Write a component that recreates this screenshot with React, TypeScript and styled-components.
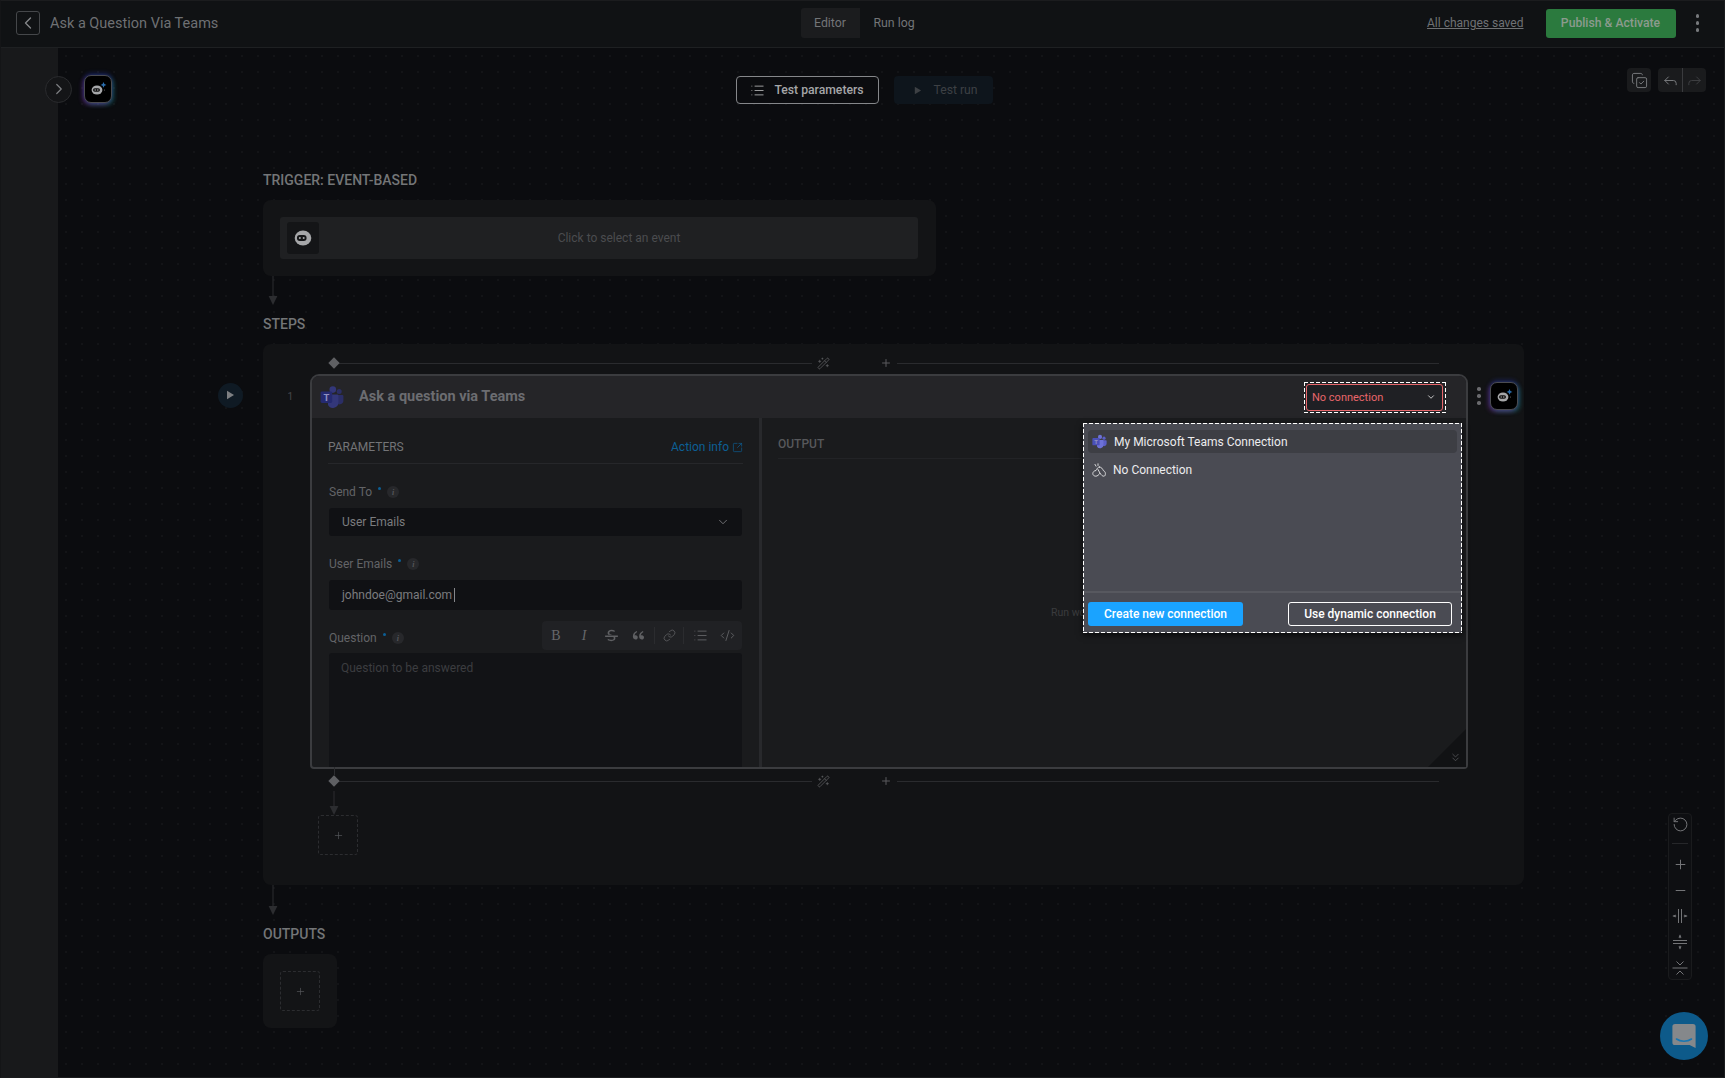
import React from "react";
import styled, { createGlobalStyle, css } from "styled-components";
import {
  ChevronDown,
  ChevronLeft,
  ChevronRight,
  ChevronsDown,
  CodeXml,
  CopyCheck,
  Forward,
  Link as LinkIcon,
  List,
  Minus,
  Plus,
  Reply,
  RotateCcw,
  SquareArrowOutUpRight,
  Wand2,
} from "lucide-react";
import { RiDoubleQuotesL, RiStrikethrough } from "react-icons/ri";

const GlobalStyle = createGlobalStyle`
  html, body { margin: 0; padding: 0; background: #0b0c0f; }
  body { font-family: Roboto, "Liberation Sans", sans-serif; overflow: hidden; }
  * { box-sizing: border-box; }
`;

const dashedFrame = css`
  padding: 1px;
  background-image: linear-gradient(90deg, #fff 66%, transparent 0), linear-gradient(90deg, #fff 66%, transparent 0),
    linear-gradient(#fff 66%, transparent 0), linear-gradient(#fff 66%, transparent 0);
  background-size: 6px 1px, 6px 1px, 1px 6px, 1px 6px;
  background-position: top left, bottom left, top left, top right;
  background-repeat: repeat-x, repeat-x, repeat-y, repeat-y;
`;

const Page = styled.div`
  position: relative;
  width: 1725px;
  height: 1078px;
  display: flex;
  flex-direction: column;
  overflow: hidden;
  background: #0b0c0f;
  border: 1px solid #1b1c1e;
  border-left-color: #141517;
`;

/* ---------- top bar ---------- */
const TopBar = styled.header`
  flex: none;
  height: 47px;
  display: grid;
  grid-template-columns: 1fr auto 1fr;
  align-items: center;
  padding: 0 25px 2px 15px;
  background: #101214;
  border-bottom: 1px solid #1e2022;
`;
const TopLeft = styled.div`
  display: flex;
  align-items: center;
  gap: 10px;
`;
const BackButton = styled.button`
  width: 24px;
  height: 24px;
  padding: 0;
  display: flex;
  align-items: center;
  justify-content: center;
  color: #85878a;
  background: transparent;
  border: 1px solid #45474a;
  border-radius: 3px;
`;
const PageTitle = styled.h1`
  margin: 0;
  font-size: 14.5px;
  font-weight: 400;
  color: #6e7073;
`;
const Tabs = styled.nav`
  display: flex;
  height: 30px;
  margin-left: 14px;
`;
const Tab = styled.div<{ $active?: boolean }>`
  display: flex;
  align-items: center;
  justify-content: center;
  width: ${(p) => (p.$active ? "59px" : "69px")};
  font-size: 12.3px;
  color: #737578;
  background: ${(p) => (p.$active ? "#1b1c1e" : "transparent")};
  border-radius: 3px 0 0 3px;
`;
const TopRight = styled.div`
  display: flex;
  align-items: center;
  justify-content: flex-end;
`;
const SavedLink = styled.a`
  font-size: 12px;
  color: #6f7174;
  text-decoration: underline;
  margin-right: 22px;
`;
const PublishButton = styled.button`
  width: 130px;
  height: 29px;
  padding: 0;
  font: 500 12.2px Roboto, sans-serif;
  color: #8b9b8e;
  background: #2b7a3e;
  border: 0;
  border-radius: 3px;
`;
const Kebab = styled.div<{ $color: string }>`
  display: flex;
  flex-direction: column;
  gap: 3.5px;
  span {
    width: 3.5px;
    height: 3.5px;
    border-radius: 50%;
    background: ${(p) => p.$color};
  }
`;
const TopKebab = styled(Kebab)`
  margin-left: 20px;
`;

/* ---------- body ---------- */
const Body = styled.div`
  flex: 1;
  display: flex;
  min-height: 0;
`;
const Sidebar = styled.aside`
  flex: none;
  width: 57px;
  background: #18191b;
`;
const Canvas = styled.main`
  position: relative;
  z-index: 1;
  flex: 1;
  padding-top: 20px;
  background-color: #0b0c0f;
  background-image: radial-gradient(circle, #131417 0.8px, transparent 1px);
  background-size: 16px 16px;
`;
const CanvasHead = styled.div`
  margin-left: -58px;
  height: 35px;
  display: grid;
  grid-template-columns: 1fr auto 1fr;
  padding: 0 18px 0 0;
`;
const HeadLeft = styled.div`
  display: flex;
  align-items: center;
  gap: 12px;
  padding: 7px 0 0 45px;
  height: 35px;
`;
const ExpandButton = styled.button`
  width: 27px;
  height: 27px;
  padding: 0;
  display: flex;
  align-items: center;
  justify-content: center;
  color: #7d7f82;
  background: #141517;
  border: 1px solid #2a2b2e;
  border-radius: 50%;
`;
const AiBadge = styled.div`
  flex: none;
  width: 28px;
  height: 28px;
  display: flex;
  align-items: center;
  justify-content: center;
  background: #000;
  border: 1px solid #4a4b50;
  border-radius: 7px;
  box-shadow: 0 -2px 4px rgba(50, 70, 200, 0.35), -2px 2px 4px rgba(150, 60, 200, 0.35),
    2px 2px 4px rgba(40, 180, 180, 0.35);
`;
const HeadCenter = styled.div`
  display: flex;
  gap: 15px;
  padding: 8px 0 0 22px;
`;
const ParamsButton = styled.button`
  width: 143px;
  height: 28px;
  padding: 0;
  display: flex;
  align-items: center;
  justify-content: center;
  gap: 9px;
  font: 500 12.2px Roboto, sans-serif;
  color: #a5a6a8;
  background: #0b0c0f;
  border: 1.5px solid #85878a;
  border-radius: 4px;
`;
const RunButton = styled.button`
  width: 99px;
  height: 28px;
  padding: 0 0 0 19px;
  display: flex;
  align-items: center;
  gap: 12px;
  font: 400 12.2px Roboto, sans-serif;
  color: #3d4044;
  background: #0e151c;
  border: 0;
  border-radius: 4px;
`;
const HeadRight = styled.div`
  display: flex;
  justify-content: flex-end;
  gap: 7px;
`;
const ToolGroup = styled.div`
  height: 24px;
  display: flex;
  background: #1a1b1d;
  border-radius: 4px;
`;
const ToolButton = styled.div<{ $dim?: boolean; $split?: boolean }>`
  width: 24px;
  display: flex;
  align-items: center;
  justify-content: center;
  color: ${(p) => (p.$dim ? "#3e3f42" : "#77797c")};
  border-left: ${(p) => (p.$split ? "1px solid #3a3b3e" : "0")};
`;

/* ---------- flow column ---------- */
const Flow = styled.div`
  margin: 69px 0 0 205px;
  width: 1261px;
`;
const SectionLabel = styled.h2`
  margin: 0 0 12px;
  font-size: 14px;
  line-height: 16px;
  font-weight: 500;
  color: #737577;
`;
const TriggerCard = styled.section`
  width: 673px;
  height: 76px;
  padding: 17px 18px 17px 17px;
  background: #131416;
  border-radius: 8px;
`;
const TriggerInner = styled.div`
  position: relative;
  height: 42px;
  display: flex;
  align-items: center;
  justify-content: center;
  padding-left: 40px;
  font-size: 12px;
  color: #4b4c4f;
  background: #1f2022;
  border-radius: 3px;
`;
const TriggerIcon = styled.div`
  position: absolute;
  left: 7px;
  top: 5px;
  width: 32px;
  height: 32px;
  display: flex;
  align-items: center;
  justify-content: center;
  background: #141517;
  border-radius: 3px;
`;
const ArrowWrap = styled.div`
  margin-left: 5px;
  svg {
    display: block;
  }
`;
const SectionGap = styled.div`
  height: 11px;
`;
const StepsCard = styled.section`
  height: 541px;
  padding-top: 9px;
  background: #121315;
  border-radius: 8px;
`;
const Inserter = styled.div`
  position: relative;
  margin-left: 66px;
  width: 1110px;
  height: 20px;
  display: flex;
  align-items: center;
  color: #5a5b5e;
`;
const LowerInserter = styled(Inserter)`
  margin-top: 2px;
  &::before {
    content: "";
    position: absolute;
    left: 5px;
    top: -4px;
    height: 8px;
    width: 1px;
    background: #2c2d30;
  }
`;
const Diamond = styled.span`
  flex: none;
  width: 8px;
  height: 8px;
  margin-left: 1px;
  transform: rotate(45deg);
  background: #5f6063;
`;
const InsertLine = styled.span<{ $w?: number }>`
  height: 1px;
  background: #2a2b2e;
  flex: ${(p) => (p.$w ? `0 0 ${p.$w}px` : "1")};
`;
const InsertIcon = styled.span`
  flex: none;
  width: 22px;
  display: flex;
  justify-content: center;
`;
const InsertSpacer = styled.span`
  flex: 0 0 41px;
`;
const StepRow = styled.div`
  display: flex;
  align-items: flex-start;
  margin: 1px 0 0 -45.5px;
`;
const PlayCircle = styled.div`
  flex: none;
  width: 25px;
  height: 25px;
  margin-top: 8.5px;
  display: flex;
  align-items: center;
  justify-content: center;
  background: #0f1a24;
  border-radius: 50%;
`;
const StepNumber = styled.div`
  flex: none;
  width: 67.5px;
  padding: 16px 17px 0 0;
  text-align: right;
  font-size: 10px;
  line-height: 14px;
  color: #47484b;
`;
const StepCard = styled.article`
  position: relative;
  flex: none;
  width: 1158px;
  height: 395px;
  display: flex;
  flex-direction: column;
  background: #1a1b1d;
  border: 2px solid #3b3c3f;
  border-radius: 9px 9px 4px 4px;
`;
const StepHeader = styled.div`
  flex: none;
  height: 42px;
  display: flex;
  align-items: center;
  padding: 0 20px 0 8px;
  background: #252528;
  border-radius: 7px 7px 0 0;
`;
const StepTitle = styled.div`
  flex: 1;
  margin: -1px 0 0 15px;
  font-size: 14.5px;
  font-weight: 700;
  color: #6c6d71;
`;
const ConnectionOutline = styled.div`
  ${dashedFrame}
  width: 142px;
  height: 31px;
  padding: 2px 3px 2px 2px;
`;
const ConnectionSelect = styled.div`
  height: 100%;
  display: flex;
  align-items: center;
  justify-content: space-between;
  padding: 0 6px 0 5px;
  font-size: 11px;
  color: #e8666b;
  background: #1f2024;
  border: 1px solid #e8666b;
  border-radius: 3px;
  svg {
    color: #e6e6e6;
  }
`;
const StepBody = styled.div`
  flex: 1;
  min-height: 0;
  display: flex;
`;
const LeftPane = styled.div`
  flex: none;
  width: 450px;
  display: flex;
  flex-direction: column;
  padding: 21px 17px 0 17px;
  border-right: 3px solid #28292c;
`;
const PaneHeader = styled.div`
  display: flex;
  align-items: center;
  justify-content: space-between;
  height: 25px;
  padding-bottom: 8px;
  border-bottom: 1px solid #26272a;
  margin: 0 -1px 0 -1px;
`;
const PaneTitle = styled.div`
  font-size: 12px;
  color: #737477;
`;
const ActionInfo = styled.a`
  display: flex;
  align-items: center;
  gap: 3px;
  font-size: 12px;
  color: #0c5f95;
`;
const FieldLabel = styled.div<{ $top?: number }>`
  display: flex;
  align-items: center;
  height: 16px;
  margin-top: ${(p) => p.$top ?? 0}px;
  font-size: 12px;
  color: #636467;
`;
const Star = styled.span`
  width: 3px;
  height: 3px;
  margin: -8px 0 0 6px;
  background: #0c5f95;
  border-radius: 50%;
`;
const InfoDot = styled.span`
  width: 12px;
  height: 12px;
  margin-left: 6px;
  display: flex;
  align-items: center;
  justify-content: center;
  font: italic 700 8px "Liberation Serif", serif;
  color: #55565a;
  background: #27282b;
  border-radius: 50%;
`;
const SelectField = styled.div`
  height: 28px;
  margin-top: 8px;
  display: flex;
  align-items: center;
  justify-content: space-between;
  padding: 0 12px 0 13px;
  font-size: 12px;
  color: #7b7c7f;
  background: #101114;
  border-radius: 3px;
`;
const InputField = styled(SelectField)`
  height: 30px;
  justify-content: flex-start;
`;
const Caret = styled.span`
  width: 1px;
  height: 14px;
  margin-left: 2px;
  background: #85868a;
`;
const QuestionRow = styled.div`
  height: 29px;
  margin-top: 11px;
  display: flex;
  align-items: center;
  justify-content: space-between;
`;
const QuestionLabel = styled(FieldLabel)`
  padding-top: 5px;
`;
const EditorTools = styled.div`
  width: 200px;
  height: 29px;
  display: flex;
  align-items: center;
  background: #202124;
  border-radius: 4px;
  color: #5f6063;
`;
const EditorTool = styled.span<{ $w: number }>`
  flex: 0 0 ${(p) => p.$w}px;
  display: flex;
  align-items: center;
  justify-content: center;
`;
const SerifGlyph = styled.span<{ $italic?: boolean }>`
  font: ${(p) => (p.$italic ? "italic 400" : "400")} 14px "Liberation Serif", serif;
  color: #66676a;
`;
const ToolSep = styled.span<{ $lead?: number }>`
  flex: none;
  width: 1px;
  height: 17px;
  margin-left: ${(p) => p.$lead ?? 0}px;
  background: #2b2c2f;
`;
const TextArea = styled.div`
  flex: 1;
  margin-top: 3px;
  padding: 8px 12px;
  font-size: 12px;
  line-height: 14px;
  color: #3c3d40;
  background: #121316;
  border-radius: 3px 3px 0 0;
`;
const RightPane = styled.div`
  flex: 1;
  position: relative;
  display: flex;
  flex-direction: column;
  padding: 18px 0 0 16px;
`;
const OutputTitle = styled.div`
  padding-bottom: 6px;
  margin-right: 384px;
  font-size: 12px;
  font-weight: 500;
  line-height: 16px;
  color: #57585b;
  border-bottom: 1px solid #222326;
`;
const RunHint = styled.div`
  margin: 147px 0 0 273px;
  font-size: 10.5px;
  color: #3a3b3e;
`;
const CornerFold = styled.div`
  position: absolute;
  right: 0;
  bottom: 0;
  width: 38px;
  height: 38px;
  clip-path: polygon(100% 0, 100% 100%, 0 100%);
  display: flex;
  align-items: flex-end;
  justify-content: flex-end;
  padding: 0 4px 3px 0;
  color: #55565a;
  background: #111214;
`;
const ConnectionPopup = styled.div`
  ${dashedFrame}
  position: absolute;
  top: 47px;
  right: 4px;
  width: 379px;
  height: 210px;
  display: flex;
  flex-direction: column;
  background-color: #4a4b53;
  box-shadow: 0 2px 6px rgba(0, 0, 0, 0.7);
`;
const PopupList = styled.div`
  flex: 1;
  display: flex;
  flex-direction: column;
  gap: 5px;
  padding: 6px 4px 0;
`;
const PopupRow = styled.div<{ $selected?: boolean }>`
  height: 23px;
  display: flex;
  align-items: center;
  gap: 7px;
  padding-left: 4px;
  font-size: 12px;
  color: #ececee;
  background: ${(p) => (p.$selected ? "#3d3e44" : "transparent")};
  border-radius: 4px;
`;
const PopupFooter = styled.div`
  height: 41px;
  display: flex;
  align-items: flex-start;
  justify-content: space-between;
  padding: 9px 9px 0 4px;
  border-top: 2px solid #57585f;
`;
const CreateButton = styled.button`
  width: 155px;
  height: 24px;
  padding: 0;
  font: 500 12px Roboto, sans-serif;
  color: #fff;
  background: #1aa3ff;
  border: 0;
  border-radius: 3px;
`;
const DynamicButton = styled.button`
  width: 164px;
  height: 24px;
  padding: 0;
  font: 500 12px Roboto, sans-serif;
  color: #fff;
  background: transparent;
  border: 1px solid #fff;
  border-radius: 3px;
`;
const StepSide = styled.div`
  display: flex;
  align-items: center;
  gap: 9px;
  margin: 8px 0 0 9px;
`;
const AddBox = styled.div`
  width: 40px;
  height: 40px;
  display: flex;
  align-items: center;
  justify-content: center;
  color: #55565a;
  border: 1px dashed #2c2d30;
  border-radius: 3px;
`;
const LowerArrow = styled(ArrowWrap)`
  margin-left: 66px;
`;
const StepAddBox = styled(AddBox)`
  margin-left: 55px;
`;
const OutputsCard = styled.section`
  width: 74px;
  height: 74px;
  padding: 17px;
  background: #131416;
  border-radius: 8px;
`;

/* ---------- overlays ---------- */
const ZoomPanel = styled.div`
  position: absolute;
  z-index: 2;
  right: 32px;
  top: 812px;
  width: 24px;
  height: 167px;
  display: flex;
  flex-direction: column;
  align-items: center;
  padding-top: 1px;
  color: #737477;
  background: #0e0f12;
  border: 1px solid #1a1b1d;
  border-radius: 4px;
`;
const ZoomSep = styled.span`
  flex: none;
  width: 16px;
  height: 1px;
  margin: 9px 0 7px;
  background: #26272a;
`;
const ZoomItem = styled.span`
  flex: 0 0 26px;
  display: flex;
  align-items: center;
  justify-content: center;
`;
const ZoomTop = styled(ZoomItem)`
  flex-basis: 19px;
`;
const ChatBubble = styled.div`
  position: absolute;
  z-index: 2;
  right: 16px;
  top: 1011px;
  width: 48px;
  height: 48px;
  display: flex;
  align-items: center;
  justify-content: center;
  background: #0d5a8a;
  border-radius: 50%;
`;

/* ---------- drawings ---------- */
const BotMark = ({ size = 16, face = "#a6a7a9" }: { size?: number; face?: string }) => (
  <svg width={size} height={size} viewBox="0 0 16 16">
    <ellipse cx="8" cy="8" rx="7.4" ry="6.6" fill={face} />
    <rect x="2.6" y="5.4" width="8.6" height="5.2" rx="2.6" fill="#141517" />
    <circle cx="5.2" cy="8" r="0.9" fill={face} />
    <circle cx="8.6" cy="8" r="0.9" fill={face} />
  </svg>
);
const AiMark = () => (
  <AiBadge>
    <svg width="20" height="20" viewBox="0 0 20 20">
      <ellipse cx="9" cy="11" rx="5.4" ry="4.6" fill="#a6a7a9" />
      <rect x="5" y="9.2" width="7" height="3.6" rx="1.8" fill="#111" />
      <circle cx="7.2" cy="11" r="0.7" fill="#a6a7a9" />
      <circle cx="9.8" cy="11" r="0.7" fill="#a6a7a9" />
      <path d="M15.5 3l.9 2 2 .9-2 .9-.9 2-.9-2-2-.9 2-.9z" fill="#2b6fb0" />
      <circle cx="16.5" cy="11" r="0.5" fill="#777" />
    </svg>
  </AiBadge>
);
const TeamsMark = ({ size, dark, light, plate }: { size: number; dark: string; light: string; plate: string }) => (
  <svg width={size} height={size} viewBox="0 0 24 24">
    <circle cx="19.2" cy="6.6" r="2.5" fill={dark} />
    <path d="M16 10h6.4a1 1 0 0 1 1 1v4.6a3.9 3.9 0 0 1-7.4 1.6z" fill={dark} />
    <circle cx="12.8" cy="4.6" r="3.3" fill={light} />
    <path d="M8 9.5h9.4a1 1 0 0 1 1 1v7a5.5 5.5 0 0 1-10.4 2.4z" fill={light} />
    <rect x="0.6" y="6.4" width="11.6" height="11.6" rx="1.4" fill={plate} />
    <text x="6.4" y="15.8" textAnchor="middle" fontSize="9.5" fontWeight="700" fontFamily="Roboto, sans-serif" fill="#8f91c0">
      T
    </text>
  </svg>
);
const NoConnectionMark = () => (
  <svg width="14" height="14" viewBox="0 0 14 14" fill="none" stroke="#e6e6e8" strokeWidth="0.9" strokeLinecap="round" strokeLinejoin="round">
    <path d="M7.4 4C5.5 4 5 6 4 7.5C2 7.7 .8 9.2 .8 10.6C.8 12.2 2.3 13.2 3.8 13.2C5.5 13.2 7 11.6 8 10.2C9 11.8 10.4 13.2 11.8 13.2C13 13.2 13.4 12 13.4 10.6C13.4 9 12.4 8 11.3 7.5C10.6 6 9.6 4 7.4 4z" />
    <path d="M6 6.5L8 10.2" />
    <path d="M3 1.4l1 1.8M6 .8v1.7" />
  </svg>
);
const ArrowDown = ({ height }: { height: number }) => (
  <svg width="10" height={height} viewBox={`0 0 10 ${height}`}>
    <rect x="4.5" y="0" width="1" height={height - 8} fill="#2c2d30" />
    <path d={`M0.6 ${height - 9}h8.8L5 ${height}z`} fill="#2c2d30" />
  </svg>
);
const FitWidth = () => (
  <svg width="16" height="16" viewBox="0 0 16 16" fill="currentColor" stroke="currentColor" strokeWidth="1">
    <path d="M6.5 1v14M9.5 1v14M.8 8h3.4M11.8 8h3.4" fill="none" />
    <path d="M3.6 6.4v3.2L1 8zM12.4 6.4v3.2L15 8z" stroke="none" />
  </svg>
);
const FitHeight = () => (
  <svg width="16" height="16" viewBox="0 0 16 16" fill="currentColor" stroke="currentColor" strokeWidth="1">
    <path d="M1 6.5h14M1 9.5h14M8 .8v3.4M8 11.8v3.4" fill="none" />
    <path d="M6.4 3.6h3.2L8 1zM6.4 12.4h3.2L8 15z" stroke="none" />
  </svg>
);
const Collapse = () => (
  <svg width="16" height="16" viewBox="0 0 16 16" fill="none" stroke="currentColor" strokeWidth="1">
    <path d="M.5 8h15M4.5 1.5L8 5l3.5-3.5M4.5 14.5L8 11l3.5 3.5" />
  </svg>
);
const ChatMark = () => (
  <svg width="24" height="26" viewBox="0 0 24 26">
    <path d="M3 1h18a2.6 2.6 0 0 1 2.6 2.6V25l-6-3H3a2.6 2.6 0 0 1-2.6-2.6V3.6A2.6 2.6 0 0 1 3 1z" fill="#85888b" />
    <path d="M4.5 16c4 3 11 3 15 0" fill="none" stroke="#1a77b2" strokeWidth="1.6" strokeLinecap="round" />
  </svg>
);
const Triangle = ({ size, color }: { size: number; color: string }) => (
  <svg width={size} height={size} viewBox="0 0 10 10">
    <path d="M2 0.8l7 4.2-7 4.2z" fill={color} />
  </svg>
);
const Dots = ({ color, as: Comp = Kebab }: { color: string; as?: typeof Kebab }) => (
  <Comp $color={color}>
    <span />
    <span />
    <span />
  </Comp>
);

const InsertBar = ({ lower }: { lower?: boolean }) => {
  const Bar = lower ? LowerInserter : Inserter;
  return (
    <Bar>
      <Diamond />
      <InsertLine $w={474} />
      <InsertIcon>
        <Wand2 size={13} strokeWidth={1.5} />
      </InsertIcon>
      <InsertSpacer />
      <InsertIcon>
        <Plus size={12} strokeWidth={2} />
      </InsertIcon>
      <InsertLine />
    </Bar>
  );
};

export default function App() {
  return (
    <Page>
      <GlobalStyle />
      <TopBar>
        <TopLeft>
          <BackButton>
            <ChevronLeft size={20} strokeWidth={1.6} />
          </BackButton>
          <PageTitle>Ask a Question Via Teams</PageTitle>
        </TopLeft>
        <Tabs>
          <Tab $active>Editor</Tab>
          <Tab>Run log</Tab>
        </Tabs>
        <TopRight>
          <SavedLink>All changes saved</SavedLink>
          <PublishButton>Publish &amp; Activate</PublishButton>
          <Dots color="#77797c" as={TopKebab} />
        </TopRight>
      </TopBar>
      <Body>
        <Sidebar />
        <Canvas>
          <CanvasHead>
            <HeadLeft>
              <ExpandButton>
                <ChevronRight size={18} strokeWidth={1.6} />
              </ExpandButton>
              <AiMark />
            </HeadLeft>
            <HeadCenter>
              <ParamsButton>
                <List size={15} strokeWidth={1.5} />
                Test parameters
              </ParamsButton>
              <RunButton>
                <Triangle size={9} color="#3d4044" />
                Test run
              </RunButton>
            </HeadCenter>
            <HeadRight>
              <ToolGroup>
                <ToolButton>
                  <CopyCheck size={17} strokeWidth={1.4} />
                </ToolButton>
              </ToolGroup>
              <ToolGroup>
                <ToolButton>
                  <Reply size={17} strokeWidth={1.4} />
                </ToolButton>
                <ToolButton $dim $split>
                  <Forward size={17} strokeWidth={1.4} />
                </ToolButton>
              </ToolGroup>
            </HeadRight>
          </CanvasHead>
          <Flow>
            <SectionLabel>TRIGGER: EVENT-BASED</SectionLabel>
            <TriggerCard>
              <TriggerInner>
                <TriggerIcon>
                  <BotMark size={18} />
                </TriggerIcon>
                Click to select an event
              </TriggerInner>
            </TriggerCard>
            <ArrowWrap>
              <ArrowDown height={29} />
            </ArrowWrap>
            <SectionGap />
            <SectionLabel>STEPS</SectionLabel>
            <StepsCard>
              <InsertBar />
              <StepRow>
                <PlayCircle>
                  <Triangle size={10} color="#7d7f82" />
                </PlayCircle>
                <StepNumber>1</StepNumber>
                <StepCard>
                  <StepHeader>
                    <TeamsMark size={24} dark="#2b2e66" light="#33377a" plate="#252a70" />
                    <StepTitle>Ask a question via Teams</StepTitle>
                    <ConnectionOutline>
                      <ConnectionSelect>
                        No connection
                        <ChevronDown size={10} strokeWidth={2} />
                      </ConnectionSelect>
                    </ConnectionOutline>
                  </StepHeader>
                  <StepBody>
                    <LeftPane>
                      <PaneHeader>
                        <PaneTitle>PARAMETERS</PaneTitle>
                        <ActionInfo>
                          Action info
                          <SquareArrowOutUpRight size={11} strokeWidth={1.5} />
                        </ActionInfo>
                      </PaneHeader>
                      <FieldLabel $top={20}>
                        Send To
                        <Star />
                        <InfoDot>i</InfoDot>
                      </FieldLabel>
                      <SelectField>
                        User Emails
                        <ChevronDown size={14} strokeWidth={1.5} />
                      </SelectField>
                      <FieldLabel $top={20}>
                        User Emails
                        <Star />
                        <InfoDot>i</InfoDot>
                      </FieldLabel>
                      <InputField>
                        johndoe@gmail.com
                        <Caret />
                      </InputField>
                      <QuestionRow>
                        <QuestionLabel>
                          Question
                          <Star />
                          <InfoDot>i</InfoDot>
                        </QuestionLabel>
                        <EditorTools>
                          <EditorTool $w={28}>
                            <SerifGlyph>B</SerifGlyph>
                          </EditorTool>
                          <EditorTool $w={28}>
                            <SerifGlyph $italic>I</SerifGlyph>
                          </EditorTool>
                          <EditorTool $w={26}>
                            <RiStrikethrough size={17} />
                          </EditorTool>
                          <EditorTool $w={28}>
                            <RiDoubleQuotesL size={15} />
                          </EditorTool>
                          <ToolSep $lead={2} />
                          <EditorTool $w={28}>
                            <LinkIcon size={13} strokeWidth={1.5} />
                          </EditorTool>
                          <ToolSep />
                          <EditorTool $w={32}>
                            <List size={15} strokeWidth={1.5} />
                          </EditorTool>
                          <EditorTool $w={22}>
                            <CodeXml size={15} strokeWidth={1.5} />
                          </EditorTool>
                        </EditorTools>
                      </QuestionRow>
                      <TextArea>Question to be answered</TextArea>
                    </LeftPane>
                    <RightPane>
                      <OutputTitle>OUTPUT</OutputTitle>
                      <RunHint>Run wo</RunHint>
                      <CornerFold>
                        <ChevronsDown size={13} strokeWidth={1.5} />
                      </CornerFold>
                    </RightPane>
                  </StepBody>
                  <ConnectionPopup>
                    <PopupList>
                      <PopupRow $selected>
                        <TeamsMark size={15} dark="#5b5fc7" light="#6d71d6" plate="#4b50b8" />
                        My Microsoft Teams Connection
                      </PopupRow>
                      <PopupRow>
                        <NoConnectionMark />
                        <span>No Connection</span>
                      </PopupRow>
                    </PopupList>
                    <PopupFooter>
                      <CreateButton>Create new connection</CreateButton>
                      <DynamicButton>Use dynamic connection</DynamicButton>
                    </PopupFooter>
                  </ConnectionPopup>
                </StepCard>
                <StepSide>
                  <Dots color="#6a6a6e" />
                  <AiMark />
                </StepSide>
              </StepRow>
              <InsertBar lower />
              <LowerArrow>
                <ArrowDown height={24} />
              </LowerArrow>
              <StepAddBox>
                <Plus size={11} strokeWidth={1.5} />
              </StepAddBox>
            </StepsCard>
            <ArrowWrap>
              <ArrowDown height={30} />
            </ArrowWrap>
            <SectionGap />
            <SectionLabel>OUTPUTS</SectionLabel>
            <OutputsCard>
              <AddBox>
                <Plus size={11} strokeWidth={1.5} />
              </AddBox>
            </OutputsCard>
          </Flow>
        </Canvas>
      </Body>
      <ZoomPanel>
        <ZoomTop>
          <RotateCcw size={17} strokeWidth={1.4} />
        </ZoomTop>
        <ZoomSep />
        <ZoomItem>
          <Plus size={15} strokeWidth={1.6} />
        </ZoomItem>
        <ZoomItem>
          <Minus size={15} strokeWidth={1.6} />
        </ZoomItem>
        <ZoomItem>
          <FitWidth />
        </ZoomItem>
        <ZoomItem>
          <FitHeight />
        </ZoomItem>
        <ZoomItem>
          <Collapse />
        </ZoomItem>
      </ZoomPanel>
      <ChatBubble>
        <ChatMark />
      </ChatBubble>
    </Page>
  );
}
